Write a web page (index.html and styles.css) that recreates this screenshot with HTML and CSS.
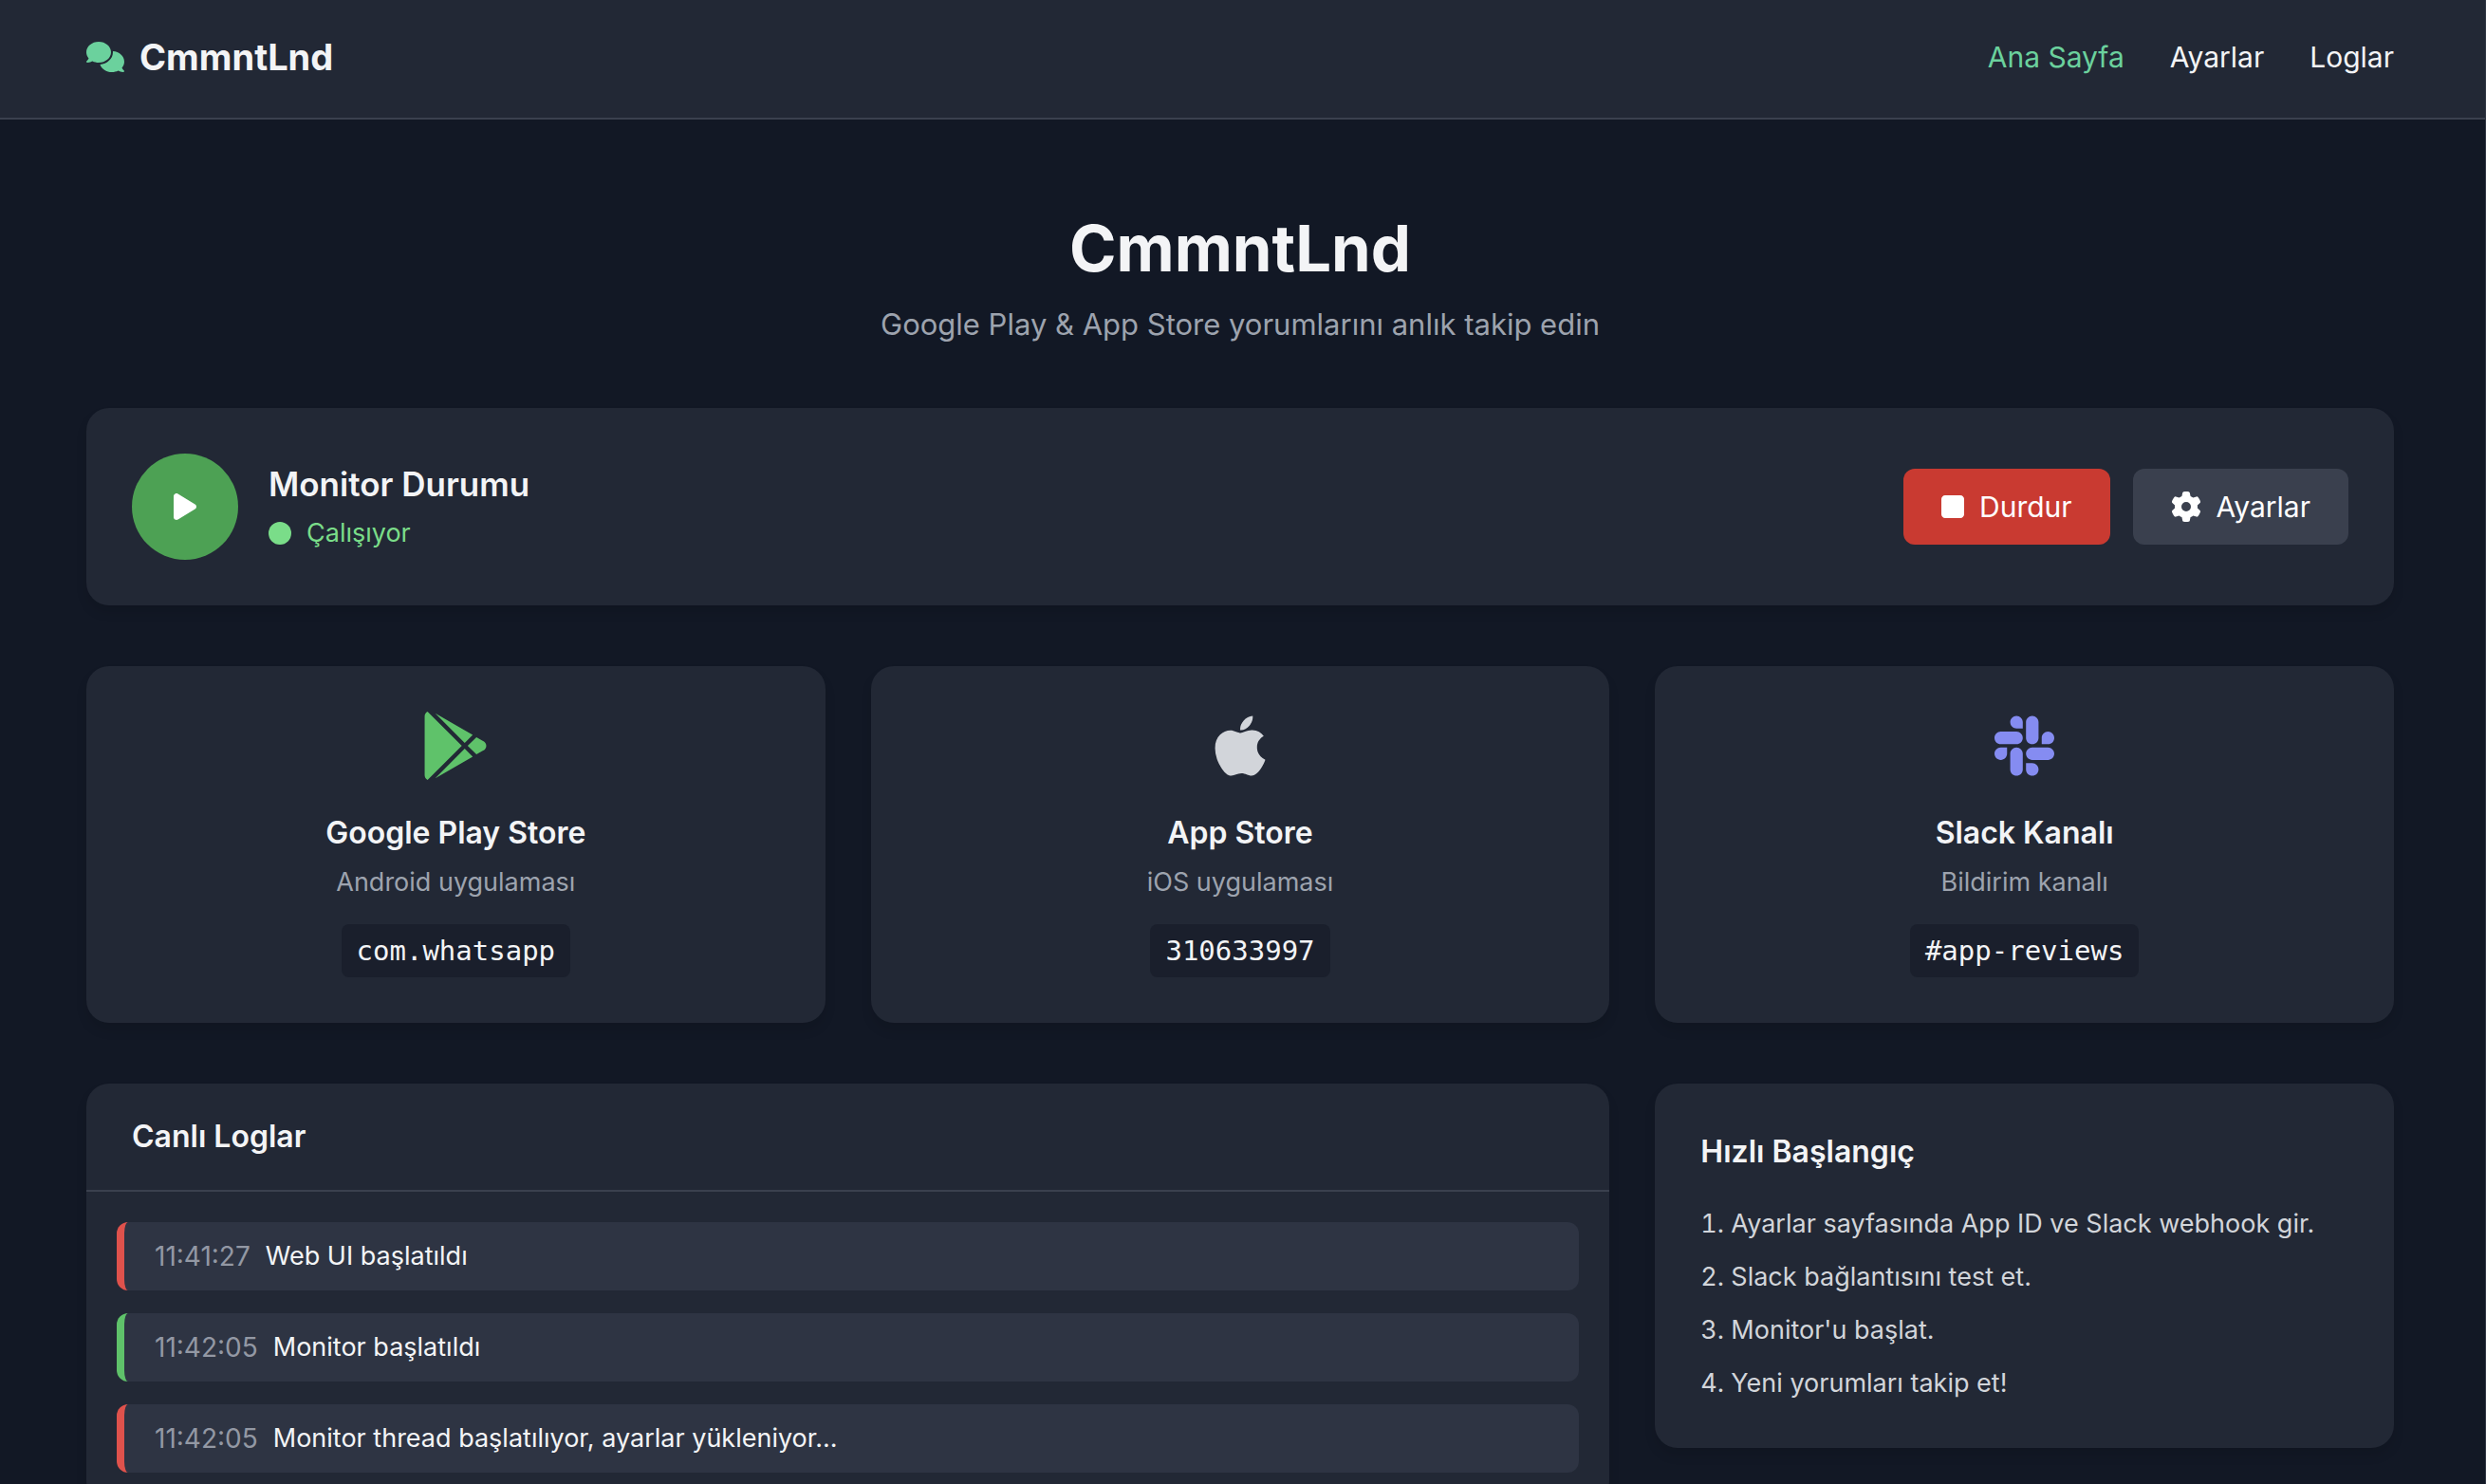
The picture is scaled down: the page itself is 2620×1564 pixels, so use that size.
FILE: index.html
```html
<!DOCTYPE html>
<html lang="tr">
<head>
<meta charset="utf-8">
<meta name="viewport" content="width=device-width, initial-scale=1">
<title>CmmntLnd</title>
<link rel="stylesheet" href="styles.css">
</head>
<body>
<header class="topbar">
  <div class="container topbar-inner">
    <a class="brand" href="#">
      <svg class="brand-icon" viewBox="0 0 640 512" aria-hidden="true"><path d="M208 352c114.900 0 208-78.800 208-176S322.900 0 208 0S0 78.800 0 176c0 38.600 14.700 74.300 39.600 103.400c-3.500 9.400-8.700 17.700-14.200 24.700c-4.800 6.200-9.700 11-13.300 14.300c-1.800 1.600-3.300 2.900-4.300 3.700c-.5 .4-.9 .7-1.100 .8l-.2 .2C1 327.200-1.400 334.400 .8 340.900S9.100 352 16 352c21.800 0 43.800-5.600 62.100-12.500c9.200-3.500 17.800-7.400 25.300-11.400C134.100 343.300 169.800 352 208 352zM448 176c0 112.300-99.100 196.900-216.500 207C255.800 457.400 336.400 512 432 512c38.200 0 73.900-8.700 104.700-23.900c7.500 4 16 7.900 25.200 11.400c18.300 6.900 40.300 12.500 62.100 12.500c6.900 0 13.100-4.500 15.200-11.100c2.100-6.600-.2-13.800-5.800-17.900l-.2-.2c-.2-.2-.6-.4-1.100-.8c-1-.8-2.500-2-4.300-3.700c-3.600-3.300-8.500-8.100-13.300-14.300c-5.500-7-10.700-15.400-14.200-24.700c24.900-29 39.600-64.700 39.600-103.400c0-92.800-84.900-168.900-192.600-175.500c.4 5.100 .6 10.300 .6 15.500z"/></svg>
      <span>CmmntLnd</span>
    </a>
    <nav class="nav">
      <a class="nav-link active" href="#">Ana Sayfa</a>
      <a class="nav-link" href="#">Ayarlar</a>
      <a class="nav-link" href="#">Loglar</a>
    </nav>
  </div>
</header>
<div class="shell">
<main class="container page">
  <section class="hero">
    <h1>CmmntLnd</h1>
    <p>Google Play &amp; App Store yorumlarını anlık takip edin</p>
  </section>

  <section class="card status">
    <div class="status-badge">
      <svg class="icon-narrow" viewBox="0 0 384 512" aria-hidden="true"><path d="M73 39c-14.800-9.100-33.400-9.400-48.500-.9S0 62.600 0 80V432c0 17.400 9.400 33.400 24.500 41.900s33.700 8.100 48.500-.9L361 297c14.300-8.700 23-24.200 23-41s-8.700-32.200-23-41L73 39z"/></svg>
    </div>
    <div class="status-text">
      <h2>Monitor Durumu</h2>
      <p><span class="dot"></span>Çalışıyor</p>
    </div>
    <div class="actions">
      <button class="btn btn-danger" type="button">
        <svg class="icon-narrow" viewBox="0 0 384 512" aria-hidden="true"><path d="M0 128C0 92.700 28.700 64 64 64H320c35.300 0 64 28.700 64 64V384c0 35.300-28.700 64-64 64H64c-35.300 0-64-28.700-64-64V128z"/></svg>
        Durdur
      </button>
      <a class="btn btn-muted" href="#">
        <svg class="icon-square" viewBox="0 0 512 512" aria-hidden="true"><path d="M495.900 166.600c3.200 8.700 .5 18.400-6.400 24.600l-43.300 39.400c1.100 8.300 1.700 16.800 1.700 25.400s-.6 17.100-1.700 25.400l43.300 39.400c6.900 6.200 9.600 15.900 6.400 24.600c-4.400 11.900-9.700 23.300-15.800 34.300l-4.700 8.100c-6.600 11-14 21.400-22.100 31.200c-5.900 7.200-15.700 9.600-24.500 6.800l-55.700-17.700c-13.400 10.300-28.200 18.900-44 25.400l-12.500 57.100c-2 9.100-9 16.300-18.200 17.800c-13.800 2.300-28 3.500-42.500 3.500s-28.700-1.200-42.500-3.500c-9.200-1.500-16.200-8.700-18.200-17.800l-12.500-57.100c-15.800-6.500-30.600-15.100-44-25.400L83.100 425.900c-8.800 2.800-18.600 .3-24.500-6.800c-8.100-9.800-15.500-20.200-22.100-31.200l-4.700-8.100c-6.100-11-11.400-22.400-15.800-34.300c-3.200-8.700-.5-18.400 6.400-24.600l43.300-39.400C64.600 273.100 64 264.600 64 256s.6-17.100 1.700-25.400L22.400 191.200c-6.900-6.200-9.600-15.900-6.400-24.600c4.400-11.900 9.700-23.300 15.800-34.300l4.700-8.100c6.600-11 14-21.400 22.100-31.200c5.900-7.200 15.700-9.600 24.500-6.800l55.700 17.700c13.400-10.300 28.200-18.900 44-25.400l12.500-57.100c2-9.100 9-16.300 18.200-17.800C227.300 1.200 241.500 0 256 0s28.700 1.200 42.500 3.500c9.200 1.500 16.200 8.700 18.200 17.800l12.500 57.100c15.800 6.500 30.600 15.100 44 25.400l55.700-17.700c8.800-2.800 18.600-.3 24.500 6.800c8.100 9.800 15.500 20.200 22.100 31.200l4.700 8.100c6.100 11 11.400 22.400 15.800 34.300zM256 336a80 80 0 1 0 0-160 80 80 0 1 0 0 160z"/></svg>
        Ayarlar
      </a>
    </div>
  </section>

  <section class="grid">
    <article class="card source">
      <svg class="source-icon green" viewBox="0 0 512 512" aria-hidden="true"><path d="M325.300 234.300L104.600 13l280.800 161.200-60.100 60.100zM47 0C34 6.800 25.300 19.200 25.300 35.300v441.300c0 16.100 8.700 28.500 21.700 35.300l256.600-256L47 0zm425.200 225.600l-58.900-34.100-65.700 64.500 65.700 64.500 60.100-34.100c18-14.300 18-46.500-1.200-60.800zM104.600 499l280.800-161.200-60.100-60.100L104.600 499z"/></svg>
      <h3>Google Play Store</h3>
      <p>Android uygulaması</p>
      <code>com.whatsapp</code>
    </article>
    <article class="card source">
      <svg class="source-icon silver" viewBox="0 0 384 512" aria-hidden="true"><path d="M318.700 268.700c-.2-36.700 16.400-64.400 50-84.800-18.800-26.900-47.200-41.700-84.700-44.600-35.500-2.800-74.300 20.700-88.500 20.700-15 0-49.400-19.700-76.400-19.700C63.300 141.200 4 184.800 4 273.500q0 39.300 14.400 81.200c12.800 36.700 59 126.700 107.200 125.200 25.200-.6 43-17.900 75.800-17.900 31.800 0 48.300 17.900 76.400 17.900 48.600-.7 90.400-82.500 102.600-119.300-65.200-30.700-61.700-90-61.700-91.900zm-56.600-164.200c27.300-32.400 24.800-61.900 24-72.500-24.100 1.400-52 16.400-67.900 34.900-17.500 19.800-27.800 44.300-25.600 71.900 26.100 2 49.900-11.400 69.500-34.300z"/></svg>
      <h3>App Store</h3>
      <p>iOS uygulaması</p>
      <code>310633997</code>
    </article>
    <article class="card source">
      <svg class="source-icon indigo" viewBox="0 0 448 512" aria-hidden="true"><path d="M94.120 315.100c0 25.900-21.160 47.060-47.060 47.060S0 341 0 315.100c0-25.900 21.160-47.060 47.060-47.060h47.060v47.060zm23.720 0c0-25.900 21.160-47.060 47.060-47.060s47.060 21.160 47.060 47.060v117.840c0 25.900-21.160 47.060-47.060 47.060s-47.060-21.160-47.060-47.060V315.100zm47.060-188.980c-25.900 0-47.060-21.160-47.060-47.060S139 32 164.900 32s47.060 21.160 47.060 47.060v47.060H164.900zm0 23.720c25.900 0 47.060 21.160 47.060 47.060s-21.160 47.060-47.060 47.060H47.060C21.160 243.960 0 222.800 0 196.900s21.160-47.060 47.060-47.060H164.900zm188.980 47.060c0-25.900 21.160-47.060 47.060-47.060 25.900 0 47.060 21.160 47.060 47.060s-21.160 47.060-47.060 47.060h-47.060V196.900zm-23.720 0c0 25.900-21.160 47.060-47.060 47.060-25.900 0-47.060-21.160-47.060-47.060V79.060c0-25.900 21.160-47.060 47.060-47.060 25.900 0 47.060 21.160 47.060 47.060V196.900zM283.100 385.880c25.900 0 47.060 21.160 47.060 47.060 0 25.900-21.160 47.060-47.060 47.060-25.900 0-47.060-21.160-47.060-47.060v-47.060h47.060zm0-23.720c-25.900 0-47.060-21.160-47.060-47.060 0-25.900 21.160-47.060 47.060-47.060h117.840c25.900 0 47.060 21.160 47.060 47.060 0 25.900-21.160 47.060-47.060 47.060H283.100z"/></svg>
      <h3>Slack Kanalı</h3>
      <p>Bildirim kanalı</p>
      <code>#app-reviews</code>
    </article>
  </section>

  <section class="grid grid-bottom">
    <div class="card logs">
      <h3 class="logs-title">Canlı Loglar</h3>
      <ul class="log-list">
        <li class="log log-red"><time>11:41:27</time><span>Web UI başlatıldı</span></li>
        <li class="log log-green"><time>11:42:05</time><span>Monitor başlatıldı</span></li>
        <li class="log log-red"><time>11:42:05</time><span>Monitor thread başlatılıyor, ayarlar yükleniyor...</span></li>
      </ul>
    </div>
    <aside class="card guide">
      <h3>Hızlı Başlangıç</h3>
      <ol>
        <li>Ayarlar sayfasında App ID ve Slack webhook gir.</li>
        <li>Slack bağlantısını test et.</li>
        <li>Monitor'u başlat.</li>
        <li>Yeni yorumları takip et!</li>
      </ol>
    </aside>
  </section>
</main>
</div>
</body>
</html>
```
FILE: styles.css
```css
:root {
  --bg: #121825;
  --card: #222835;
  --line: #3a404e;
  --text: #f3f4f6;
  --muted: #9da3ae;
  --soft: #d2d5da;
}

* {
  box-sizing: border-box;
  margin: 0;
  padding: 0;
}

body {
  height: 100vh;
  overflow: hidden;
  border-right: 1px solid #2f3542;
  background: var(--bg);
  color: var(--text);
  font-family: Inter, "Liberation Sans", sans-serif;
  font-size: 31px;
  line-height: 48px;
}

a {
  color: inherit;
  text-decoration: none;
}

ul,
ol {
  list-style: none;
}

svg {
  display: block;
  flex: none;
  fill: currentColor;
}

h3 {
  font-size: 32px;
  font-weight: 600;
}

.container {
  width: 100%;
  max-width: 2560px;
  margin: 0 auto;
  padding: 0 64px;
}

.topbar,
.shell {
  padding-right: 5px;
}

.topbar {
  background: var(--card);
  border-bottom: 2px solid var(--line);
}

.topbar-inner {
  display: flex;
  justify-content: space-between;
  align-items: center;
  padding-top: 32px;
  padding-bottom: 36px;
  line-height: 56px;
}

.brand {
  display: flex;
  align-items: center;
  gap: 16px;
  font-size: 38px;
  font-weight: 700;
}

.brand-icon {
  width: 40px;
  height: 32px;
  color: #6bd19d;
}

.nav {
  display: flex;
  gap: 48px;
  font-size: 30px;
}

.active {
  color: #6bd19d;
}

.page {
  display: flex;
  flex-direction: column;
  gap: 64px;
  padding-top: 96px;
}

.hero {
  text-align: center;
}

.hero h1 {
  font-size: 67px;
  font-weight: 700;
  line-height: 80px;
}

.hero p {
  margin-top: 16px;
  color: var(--muted);
}

.card {
  background: var(--card);
  border-radius: 24px;
  box-shadow: 0 8px 12px rgba(0, 0, 0, 0.1);
}

.status {
  display: flex;
  align-items: center;
  gap: 32px;
  padding: 48px;
}

.status-badge {
  display: grid;
  place-items: center;
  width: 112px;
  height: 112px;
  border-radius: 50%;
  background: #4da154;
  color: #fff;
}

.icon-narrow {
  width: 24px;
  height: 32px;
}

.icon-square {
  width: 32px;
  height: 32px;
}

.status-text h2 {
  font-size: 35px;
  font-weight: 600;
  line-height: 56px;
}

.status-text p {
  display: flex;
  align-items: center;
  gap: 16px;
  color: #7add89;
  font-size: 27px;
}

.dot {
  width: 24px;
  height: 24px;
  border-radius: 50%;
  background: currentColor;
}

.actions {
  display: flex;
  gap: 24px;
  margin-left: auto;
}

.btn {
  display: flex;
  align-items: center;
  gap: 16px;
  padding: 16px 40px;
  border: 0;
  border-radius: 12px;
  color: #fff;
  font: inherit;
  font-size: 30px;
}

.btn-danger {
  background: #c93a31;
}

.btn-muted {
  background: #3a404e;
}

.grid {
  display: grid;
  grid-template-columns: repeat(3, 1fr);
  gap: 48px;
}

.source {
  display: flex;
  flex-direction: column;
  align-items: center;
  padding: 48px;
}

.source-icon {
  height: 72px;
  margin-bottom: 32px;
}

.green {
  color: #5fc26a;
}

.silver {
  color: #d2d5da;
}

.indigo {
  color: #858cf1;
}

.source p {
  margin: 8px 0 24px;
  color: var(--muted);
  font-size: 27px;
  line-height: 40px;
}

.source code {
  padding: 8px 16px;
  border-radius: 8px;
  background: #1a1f2c;
  font-family: "DejaVu Sans Mono", "Liberation Mono", monospace;
  font-size: 29px;
  line-height: 40px;
}

.grid-bottom {
  align-items: start;
}

.logs {
  grid-column: span 2;
}

.logs-title {
  padding: 32px 48px;
  border-bottom: 2px solid var(--line);
}

.log-list {
  display: flex;
  flex-direction: column;
  gap: 24px;
  padding: 32px;
  font-size: 27px;
  line-height: 40px;
}

.log {
  display: flex;
  gap: 16px;
  padding: 16px 32px;
  border-left: 8px solid;
  border-radius: 12px;
  background: #2e3443;
}

.log span {
  color: var(--text);
}

.log time {
  color: #9398a4;
  font-size: 28px;
}

.log-red {
  border-color: #df524c;
}

.log-green {
  border-color: #5fc26a;
}

.guide {
  padding: 48px;
}

.guide ol {
  display: flex;
  flex-direction: column;
  gap: 16px;
  margin-top: 32px;
  color: var(--soft);
  font-size: 27px;
  line-height: 40px;
  list-style: decimal inside;
}
```
